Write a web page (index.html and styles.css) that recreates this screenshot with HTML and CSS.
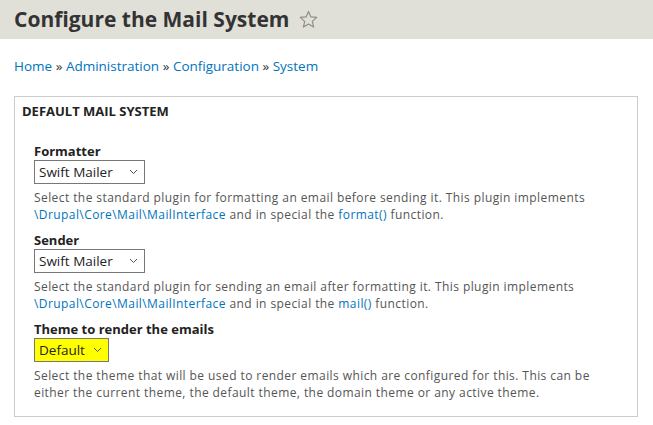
FILE: index.html
```html
<!DOCTYPE html>
<html>
<head>
<meta charset="utf-8">
<link rel="stylesheet" href="styles.css">
</head>
<body>
<header class="page-header">
  <h1 class="page-title">Configure the Mail System</h1>
  <svg class="star" width="19" height="19" viewBox="0 0 20 20"><path d="M10 1.5 L12.5 7.3 L18.7 7.8 L14 11.9 L15.4 18 L10 14.8 L4.6 18 L6 11.9 L1.3 7.8 L7.5 7.3 Z" fill="none" stroke="#8e8c84" stroke-width="1.2" stroke-linejoin="round"/></svg>
</header>
<nav class="breadcrumb">
  <a href="#">Home</a> » <a href="#">Administration</a> » <a href="#">Configuration</a> » <a href="#">System</a>
</nav>
<fieldset class="panel">
  <div class="legend">DEFAULT MAIL SYSTEM</div>
  <div class="panel-body">
    <div class="item">
      <label class="label">Formatter</label>
      <div class="select wide"><span>Swift Mailer</span><svg class="chev" width="9" height="6" viewBox="0 0 9 6"><path d="M1 1 L4.5 4.5 L8 1" fill="none" stroke="#555" stroke-width="1"/></svg></div>
      <div class="desc">Select the standard plugin for formatting an email before sending it. This plugin implements <a href="#">\Drupal\Core\Mail\MailInterface</a> and in special the <a href="#">format()</a> function.</div>
    </div>
    <div class="item">
      <label class="label">Sender</label>
      <div class="select wide"><span>Swift Mailer</span><svg class="chev" width="9" height="6" viewBox="0 0 9 6"><path d="M1 1 L4.5 4.5 L8 1" fill="none" stroke="#555" stroke-width="1"/></svg></div>
      <div class="desc">Select the standard plugin for sending an email after formatting it. This plugin implements <a href="#">\Drupal\Core\Mail\MailInterface</a> and in special the <a href="#">mail()</a> function.</div>
    </div>
    <div class="item">
      <label class="label">Theme to render the emails</label>
      <div class="select narrow hl"><span>Default</span><svg class="chev" width="9" height="6" viewBox="0 0 9 6"><path d="M1 1 L4.5 4.5 L8 1" fill="none" stroke="#555" stroke-width="1"/></svg></div>
      <div class="desc">Select the theme that will be used to render emails which are configured for this. This can be either the current theme, the default theme, the domain theme or any active theme.</div>
    </div>
  </div>
</fieldset>
</body>
</html>
```
FILE: styles.css
```css
html, body {
  margin: 0;
  padding: 0;
  background: #fff;
  font-family: "Open Sans", "Noto Sans", sans-serif;
  color: #333;
}
.page-header {
  background: #e0dfd8;
  height: 39px;
  display: flex;
  align-items: center;
  padding-left: 14px;
  gap: 10px;
}
.page-title {
  margin: 0;
  font-size: 21px;
  font-weight: 700;
  color: #333;
  line-height: 1;
}
.breadcrumb {
  margin: 18px 0 0 14px;
  font-size: 13.5px;
  line-height: 18px;
  color: #333;
}
.breadcrumb a, .desc a {
  color: #0074bd;
  text-decoration: none;
}
.panel {
  margin: 21px 15px 0 14px;
  border: 1px solid #ccc;
  padding: 0;
  min-width: 0;
  height: 321px;
  box-sizing: border-box;
}
.legend {
  font-size: 13px;
  font-weight: 700;
  color: #222;
  padding: 6px 0 0 7px;
  line-height: 17px;
}
.panel-body {
  padding: 23px 10px 0 19px;
  display: flex;
  flex-direction: column;
  gap: 9px;
}
.label {
  display: block;
  font-size: 13px;
  font-weight: 700;
  color: #222;
  line-height: 17px;
}
.select {
  box-sizing: border-box;
  height: 24px;
  border: 1px solid #777;
  display: flex;
  align-items: center;
  justify-content: space-between;
  padding: 0 6px 0 4px;
  font-size: 13.5px;
  color: #222;
}
.select.wide { width: 111px; }
.select.narrow { width: 75px; }
.select.hl { background: #ffff00; }
.desc {
  font-size: 12px;
  letter-spacing: 0.42px;
  line-height: 17px;
  color: #555;
  margin-top: 5px;
}
```
